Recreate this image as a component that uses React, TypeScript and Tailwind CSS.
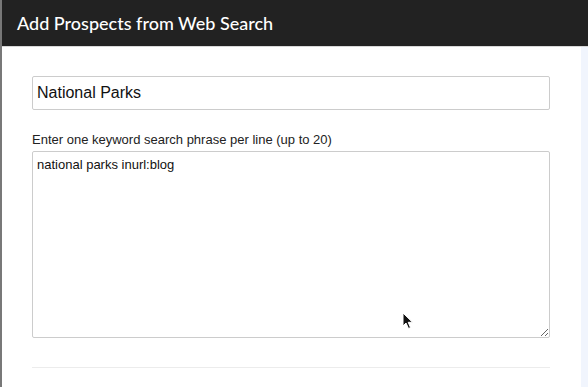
import React from "react";

export default function App() {
  return (
    <div className="relative flex h-[387px] w-[588px] overflow-hidden bg-white">
      <div className="w-[2px] shrink-0 bg-[#787878]" />
      <div className="flex min-w-0 flex-1 flex-col">
        <div className="flex h-[47px] shrink-0 items-center border-b border-[#d8d8d8] bg-[#222222] pl-[15px]">
          <h1 className="text-[18px] font-medium text-white [font-family:Lato,'Open_Sans',sans-serif]">
            Add Prospects from Web Search
          </h1>
        </div>
        <div className="flex flex-1">
          <div className="flex-1 px-[30px] pt-[29px] pr-[31px] [font-family:'Liberation_Sans',Arial,sans-serif]">
            <input
              readOnly
              value="National Parks"
              className="block h-[34px] w-full rounded-[2px] border border-[#cccccc] px-[4px] text-[16px] text-[#111] outline-none"
            />
            <label className="mt-[22px] block text-[13px] leading-[16px] text-[#222]">
              Enter one keyword search phrase per line (up to 20)
            </label>
            <textarea
              readOnly
              value="national parks inurl:blog"
              className="mt-[3px] block h-[187px] w-full resize-y rounded-[2px] border border-[#cccccc] px-[4px] pt-[5px] pb-[4px] text-[13px] leading-[16px] text-[#111] outline-none"
            />
            <div className="mt-[29px] h-px w-full bg-[#ececec]" />
          </div>
          <div className="w-[7px] shrink-0 bg-[#f1f5fd]" />
        </div>
      </div>
      <svg
        className="absolute left-[402px] top-[312px]"
        width="12"
        height="18"
        viewBox="0 0 12 18"
      >
        <path d="M1 1 L1 14 L4 11 L6.5 16.5 L8.5 15.6 L6.2 10.3 L10.5 10.3 Z" fill="#111" stroke="#fff" strokeWidth="1" />
      </svg>
    </div>
  );
}
